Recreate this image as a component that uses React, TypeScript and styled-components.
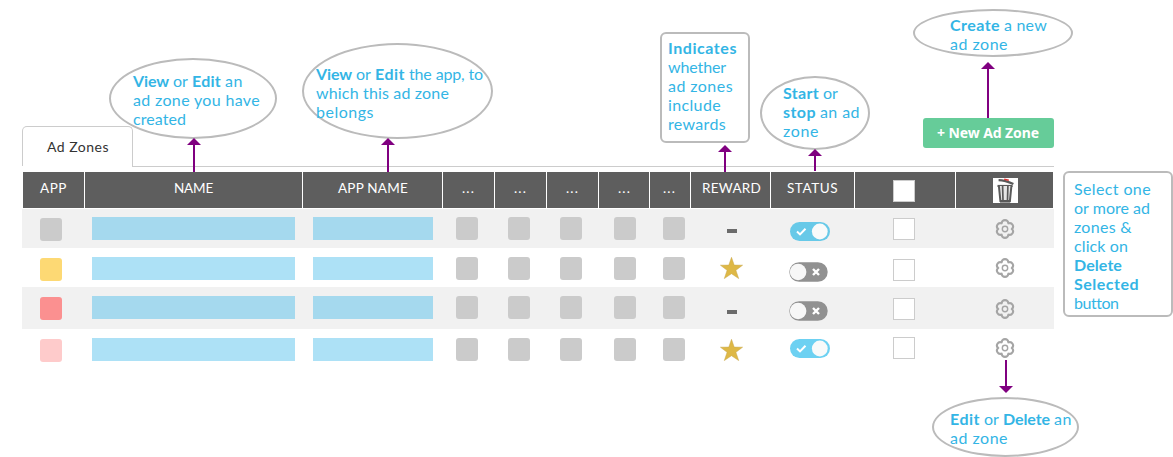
import React, { useLayoutEffect, useRef, useState } from "react";
import styled, { createGlobalStyle } from "styled-components";

const hand = `"Lato", "Open Sans", sans-serif`;

const GlobalStyle = createGlobalStyle`
  * { box-sizing: border-box; }
  body { margin: 0; background: #fff; overflow: hidden; }
`;

const Page = styled.main`
  position: relative;
  width: 1173px;
  height: 457px;
  overflow: hidden;
  background: #fff;
  font-family: ${hand};
`;

const Panel = styled.section`
  width: 1032px;
  margin-left: 22px;
  padding-top: 118px;
`;

const Toolbar = styled.div`
  display: flex;
  height: 49px;
  margin-bottom: 5px;
`;

const Tab = styled.div`
  width: 111px;
  height: 40px;
  margin-top: 8px;
  padding: 11px 0 0 24px;
  border: 1px solid #ccc;
  border-bottom: 0;
  border-radius: 5px 5px 0 0;
  color: #333;
  font-size: 14px;
  line-height: 18px;
`;

const ToolbarRest = styled.div`
  flex: 1;
  display: flex;
  justify-content: flex-end;
  align-items: flex-start;
  margin-left: -1px;
  border-bottom: 1px solid #ccc;
`;

const NewButton = styled.button`
  width: 131px;
  height: 30px;
  padding: 0 0 0 14px;
  border: 0;
  border-radius: 3px;
  background: #66cc99;
  color: #fff;
  text-align: left;
  font: 700 14px/30px "Noto Sans", "Open Sans", sans-serif;
`;

const columns = "62px 218px 140px 52px 52px 52px 51px 41px 80px 84px 101px 97px";

const HeaderRow = styled.div`
  display: grid;
  grid-template-columns: ${columns};
  height: 36px;
  margin: 0 1px 1px;
  color: #fff;
  font-size: 13.5px;
`;

const HeaderCell = styled.div<{ $left: number; $top?: number }>`
  padding: ${(p) => p.$top ?? 8}px 0 0 ${(p) => p.$left}px;
  background: #5e5e5e;
  line-height: 17px;
  &:not(:last-child) { border-right: 1px solid #fff; }
`;

const Row = styled.div<{ $height: number; $shaded: boolean }>`
  display: grid;
  grid-template-columns: ${columns};
  height: ${(p) => p.$height}px;
  padding-left: 1px;
  background: ${(p) => (p.$shaded ? "#f1f1f1" : "#fff")};
`;

const Cell = styled.div<{ $left: number; $top: number }>`
  padding: ${(p) => p.$top}px 0 0 ${(p) => p.$left}px;
  line-height: 0;
`;

const Square = styled.div<{ $color?: string }>`
  width: 22px;
  height: 23px;
  border-radius: 3px;
  background: ${(p) => p.$color ?? "#cbcbcb"};
`;

const Bar = styled.div<{ $width: number; $shaded: boolean }>`
  width: ${(p) => p.$width}px;
  height: 23px;
  background: ${(p) => (p.$shaded ? "#a5d9ee" : "#ade1f6")};
`;

const Checkbox = styled.div`
  width: 22px;
  height: 22px;
  border: 1px solid #ccc;
  background: #fff;
`;

const Dash = styled.div`
  width: 10px;
  height: 4px;
  background: #6b6b6b;
`;

const Outline = styled.div<{ $x: number; $y: number; $w: number; $h: number; $box?: boolean }>`
  position: absolute;
  left: ${(p) => p.$x}px;
  top: ${(p) => p.$y}px;
  width: ${(p) => p.$w}px;
  height: ${(p) => p.$h}px;
  border: 2px solid #bbb;
  border-radius: ${(p) => (p.$box ? "6px" : "50%")};
`;

const NoteText = styled.div<{ $x: number; $y: number }>`
  position: absolute;
  left: ${(p) => p.$x}px;
  top: ${(p) => p.$y}px;
  color: #33b5e5;
  font-size: 16px;
  line-height: 19px;
`;

const NoteLine = styled.div`
  display: flex;
  gap: 4px;
  height: 19px;
  white-space: nowrap;
`;

const FitBox = styled.span<{ $width: number; $bold?: boolean }>`
  display: inline-block;
  width: ${(p) => p.$width}px;
  white-space: nowrap;
  font-weight: ${(p) => (p.$bold ? 700 : "inherit")};
`;

/* Spreads or tightens the letters so that a phrase fills its width. */
function Fit({ text, width, bold }: { text: string; width: number; bold?: boolean }) {
  const ref = useRef<HTMLSpanElement>(null);
  const [spacing, setSpacing] = useState(0);
  useLayoutEffect(() => {
    if (!ref.current) return;
    const natural = ref.current.getBoundingClientRect().width - spacing * text.length;
    setSpacing((width - natural) / text.length);
  }, [text, width]);
  return (
    <FitBox $width={width} $bold={bold}>
      <span ref={ref} style={{ letterSpacing: spacing }}>{text}</span>
    </FitBox>
  );
}

const ArrowSvg = styled.svg<{ $x: number; $y: number }>`
  position: absolute;
  left: ${(p) => p.$x - 7}px;
  top: ${(p) => p.$y}px;
`;

function Arrow({ x, y, length, down }: { x: number; y: number; length: number; down?: boolean }) {
  return (
    <ArrowSvg $x={x} $y={y} width="14" height={length} viewBox={`0 0 14 ${length}`} fill="#800080">
      <g transform={down ? `matrix(1 0 0 -1 0 ${length})` : undefined}>
        <path d="M7 0L14 7H0Z" />
        <rect x="6" y="6" width="2" height={length - 6} />
      </g>
    </ArrowSvg>
  );
}

function Star() {
  return (
    <svg width="23" height="22" viewBox="0 0 23 22">
      <path
        d="M11.5 .3L14.2 8.1L22.6 8.2L15.9 13.3L18.7 21.6L11.5 16.7L4.3 21.6L7.1 13.3L.4 8.2L8.8 8.1Z"
        fill="#deb846"
        stroke="#c9a94e"
        strokeWidth=".5"
      />
    </svg>
  );
}

function Toggle({ on, shaded }: { on: boolean; shaded: boolean }) {
  if (on) {
    return (
      <svg width="40" height="19" viewBox="0 0 40 19">
        <rect width="40" height="19" rx="9.5" fill={shaded ? "#67c9e8" : "#6dd1f2"} />
        <circle cx="29.8" cy="9.5" r="7.9" fill="#f8fafa" />
        <path d="M7 9.5L10 12.4L15.5 6.7" fill="none" stroke="#fff" strokeWidth="2" />
      </svg>
    );
  }
  return (
    <svg width="39" height="20" viewBox="0 0 39 20">
      <rect x=".3" y=".2" width="38.4" height="19.6" rx="9.8" fill="#919191" />
      <circle cx="9.1" cy="10" r="8.3" fill="#f7f7f7" />
      <path d="M24 7L30 13M30 7L24 13" stroke="#fff" strokeWidth="2.4" />
    </svg>
  );
}

function Gear() {
  return (
    <svg width="20" height="20" viewBox="0 0 20 20" fill="none" stroke="#a5a5a5">
      <path
        d="M3.2 10A3.35 3.3 0 0 1 6.6 4.4A3.4 3.3 0 0 1 13.4 4.4A3.35 3.3 0 0 1 16.8 10A3.35 3.3 0 0 1 13.4 15.6A3.4 3.3 0 0 1 6.6 15.6A3.35 3.3 0 0 1 3.2 10Z"
        strokeWidth="2.1"
        strokeLinejoin="round"
      />
      <circle cx="10" cy="10" r="2.7" strokeWidth="1.4" />
    </svg>
  );
}

function Trash() {
  return (
    <svg width="25" height="25" viewBox="0 0 25 25" fill="none">
      <path d="M0 0H25V25H0Z" fill="#fff" />
      <path d="M5.6 2.2Q12 2.4 20.4 6" stroke="#5a5a5a" strokeWidth="2.3" />
      <path d="M11.2 1.2L15.8 2.2" stroke="#d33" strokeWidth="1.5" />
      <path d="M4.5 6.9H19.6V9H4.5Z" fill="#5a5a5a" />
      <path d="M5.9 8L7.4 23H16.9L18.4 8" fill="#e6e6e6" stroke="#5a5a5a" strokeWidth="2" />
      <path d="M9.6 8L10 22M14.9 8L14.5 22" stroke="#5a5a5a" strokeWidth="1.7" />
      <path d="M7 22.2H17.3V24.6H7Z" fill="#5a5a5a" />
    </svg>
  );
}

type Part = { t: string; w: number; b?: boolean };
type Note = { shape: [number, number, number, number]; box?: boolean; at: [number, number]; lines: Part[][] };

const notes: Note[] = [
  {
    shape: [109, 58, 168, 81],
    at: [133, 71],
    lines: [
      [{ t: "View", w: 36, b: true }, { t: "or", w: 15 }, { t: "Edit", w: 29, b: true }, { t: "an", w: 18 }],
      [{ t: "ad zone you have", w: 127 }],
      [{ t: "created", w: 53 }],
    ],
  },
  {
    shape: [302, 43, 191, 96],
    at: [316, 64],
    lines: [
      [{ t: "View", w: 36, b: true }, { t: "or", w: 15 }, { t: "Edit", w: 30, b: true }, { t: "the app, to", w: 74 }],
      [{ t: "which this ad zone", w: 133 }],
      [{ t: "belongs", w: 58 }],
    ],
  },
  {
    shape: [660, 32, 90, 111],
    box: true,
    at: [668, 38],
    lines: [
      [{ t: "Indicates", w: 69, b: true }],
      [{ t: "whether", w: 58 }],
      [{ t: "ad zones", w: 65 }],
      [{ t: "include", w: 53 }],
      [{ t: "rewards", w: 58 }],
    ],
  },
  {
    shape: [760, 76, 110, 74],
    at: [783, 83],
    lines: [
      [{ t: "Start", w: 36, b: true }, { t: "or", w: 15 }],
      [{ t: "stop", w: 33, b: true }, { t: "an ad", w: 40 }],
      [{ t: "zone", w: 36 }],
    ],
  },
  {
    shape: [913, 9, 160, 48],
    at: [950, 15],
    lines: [[{ t: "Create", w: 50, b: true }, { t: "a new", w: 43 }], [{ t: "ad zone", w: 58 }]],
  },
  {
    shape: [1063, 171, 110, 146],
    box: true,
    at: [1074, 179],
    lines: [
      [{ t: "Select one", w: 77 }],
      [{ t: "or more ad", w: 76 }],
      [{ t: "zones &", w: 58 }],
      [{ t: "click on", w: 54 }],
      [{ t: "Delete", w: 48, b: true }],
      [{ t: "Selected", w: 65, b: true }],
      [{ t: "button", w: 44 }],
    ],
  },
  {
    shape: [932, 397, 147, 60],
    at: [950, 409],
    lines: [
      [{ t: "Edit", w: 30, b: true }, { t: "or", w: 15 }, { t: "Delete", w: 47, b: true }, { t: "an", w: 18 }],
      [{ t: "ad zone", w: 58 }],
    ],
  },
];

const rows = [
  { height: 39, color: "#cbcbcb", bar: 8, reward: false, rewardTop: 20, on: true, toggleTop: 13, check: 9, gear: 10 },
  { height: 39, color: "#fdd974", bar: 9, reward: true, rewardTop: 9, on: false, toggleTop: 14, check: 11, gear: 10 },
  { height: 42, color: "#fb9090", bar: 9, reward: false, rewardTop: 23, on: false, toggleTop: 14, check: 11, gear: 12 },
  { height: 41, color: "#fecbcb", bar: 9, reward: true, rewardTop: 10, on: true, toggleTop: 10, check: 8, gear: 9 },
];

const placeholderLefts = [13, 13, 13, 15, 13];

export default function App() {
  return (
    <Page>
      <GlobalStyle />
      <Panel>
        <Toolbar>
          <Tab><Fit text="Ad Zones" width={62} /></Tab>
          <ToolbarRest>
            <NewButton><Fit text="+ New Ad Zone" width={102} /></NewButton>
          </ToolbarRest>
        </Toolbar>
        <HeaderRow>
          <HeaderCell $left={17}><Fit text="APP" width={27} /></HeaderCell>
          <HeaderCell $left={89}><Fit text="NAME" width={39} /></HeaderCell>
          <HeaderCell $left={35}><Fit text="APP NAME" width={70} /></HeaderCell>
          {[19, 19, 19, 19, 13].map((left, i) => (
            <HeaderCell key={i} $left={left}><Fit text="..." width={13} /></HeaderCell>
          ))}
          <HeaderCell $left={11}><Fit text="REWARD" width={59} /></HeaderCell>
          <HeaderCell $left={16}><Fit text="STATUS" width={51} /></HeaderCell>
          <HeaderCell $left={38}><Checkbox /></HeaderCell>
          <HeaderCell $left={37} $top={6}><Trash /></HeaderCell>
        </HeaderRow>
        {rows.map((r, i) => {
          const shaded = i % 2 === 0;
          return (
            <Row key={i} $height={r.height} $shaded={shaded}>
              <Cell $left={17} $top={r.bar + 1}><Square $color={r.color} /></Cell>
              <Cell $left={7} $top={r.bar}><Bar $width={203} $shaded={shaded} /></Cell>
              <Cell $left={10} $top={r.bar}><Bar $width={120} $shaded={shaded} /></Cell>
              {placeholderLefts.map((left, n) => (
                <Cell key={n} $left={left} $top={r.bar}><Square /></Cell>
              ))}
              <Cell $left={r.reward ? 29 : 36} $top={r.rewardTop}>{r.reward ? <Star /> : <Dash />}</Cell>
              <Cell $left={r.on ? 19 : 18} $top={r.toggleTop}><Toggle on={r.on} shaded={shaded} /></Cell>
              <Cell $left={38} $top={r.check}><Checkbox /></Cell>
              <Cell $left={39} $top={r.gear}><Gear /></Cell>
            </Row>
          );
        })}
      </Panel>

      {notes.map((n, i) => (
        <React.Fragment key={i}>
          <Outline $x={n.shape[0]} $y={n.shape[1]} $w={n.shape[2]} $h={n.shape[3]} $box={n.box} />
          <NoteText $x={n.at[0]} $y={n.at[1]}>
            {n.lines.map((line, k) => (
              <NoteLine key={k}>
                {line.map((p, m) => <Fit key={m} text={p.t} width={p.w} bold={p.b} />)}
              </NoteLine>
            ))}
          </NoteText>
        </React.Fragment>
      ))}

      <Arrow x={194} y={138} length={34} />
      <Arrow x={388} y={138} length={34} />
      <Arrow x={725} y={145} length={27} />
      <Arrow x={815} y={149} length={22} />
      <Arrow x={988} y={62} length={56} />
      <Arrow x={1006} y={360} length={33} down />
    </Page>
  );
}
